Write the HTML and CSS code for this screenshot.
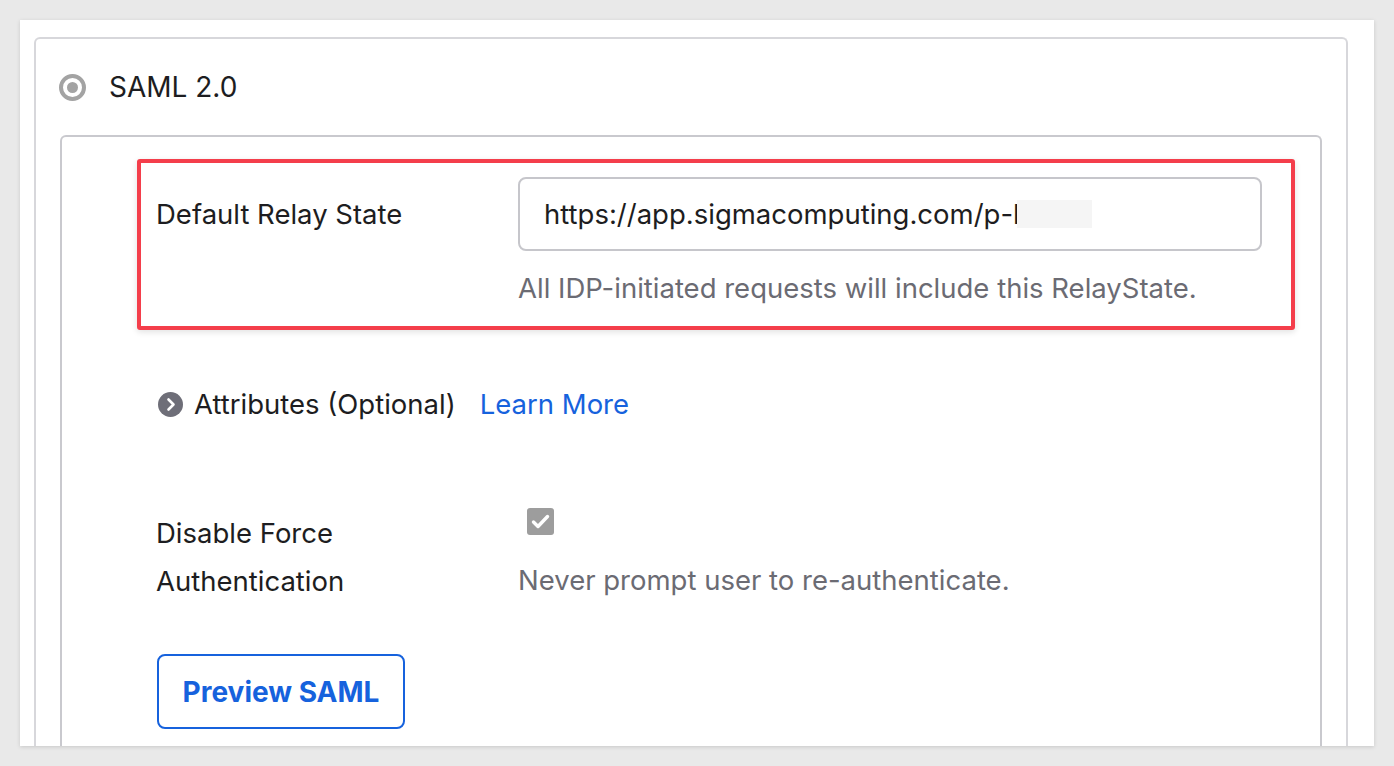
FILE: index.html
```html
<!DOCTYPE html>
<html lang="en">
<head>
<meta charset="utf-8">
<title>SAML 2.0 settings</title>
<link rel="stylesheet" href="styles.css">
</head>
<body>
<div class="panel">
  <div class="card">
    <div class="card-head">
      <span class="radio"><span class="radio-dot"></span></span>
      <span class="card-title">SAML 2.0</span>
    </div>
    <div class="inner">
      <div class="highlight">
        <div class="field">
          <div class="label label-first">Default Relay State</div>
          <div class="value">
            <div class="text-input"><span class="input-text">https://app.sigmacomputing.com/p-b</span><span class="redact"></span></div>
            <div class="helper helper-first">All IDP-initiated requests will include this RelayState.</div>
          </div>
        </div>
      </div>

      <div class="attributes">
        <svg class="chev" width="25" height="25" viewBox="0 0 25 25" aria-hidden="true">
          <circle cx="12.5" cy="12.5" r="12.5" fill="#6e6e78"/>
          <path d="M10.5 7.5 L15.5 12.5 L10.5 17.5" fill="none" stroke="#fff" stroke-width="2.6" stroke-linecap="round" stroke-linejoin="round"/>
        </svg>
        <span class="attr-text">Attributes (Optional)</span>
        <a class="learn" href="#">Learn More</a>
      </div>

      <div class="field field-force">
        <div class="label">Disable Force<br>Authentication</div>
        <div class="value">
          <div class="check-wrap">
            <span class="checkbox">
              <svg width="27" height="27" viewBox="0 0 27 27" aria-hidden="true">
                <path d="M6.5 14 L11 18.5 L20.5 8.5" fill="none" stroke="#fff" stroke-width="3.4" stroke-linecap="round" stroke-linejoin="round"/>
              </svg>
            </span>
          </div>
          <div class="helper">Never prompt user to re-authenticate.</div>
        </div>
      </div>

      <button class="btn" type="button">Preview SAML</button>
    </div>
  </div>
</div>
</body>
</html>
```

FILE: styles.css
```css
html, body {
  margin: 0;
  padding: 0;
}
body {
  background: #e9e9e9;
  height: 766px;
  overflow: hidden;
  font-family: Inter, "Noto Sans", "Liberation Sans", sans-serif;
  color: #1d1d21;
  font-size: 27.5px;
}
.panel {
  margin: 20px 20px 0 20px;
  height: 726px;
  background: #ffffff;
  box-shadow: 0 1px 4px rgba(0, 0, 0, 0.14);
  overflow: hidden;
}
.card {
  margin: 17px 26px 0 14px;
  border: 2px solid #d7d7db;
  border-bottom: none;
  border-radius: 6px 6px 0 0;
  padding: 0 24px;
  height: 900px;
}
.card-head {
  height: 96px;
  display: flex;
  align-items: center;
  gap: 23px;
}
.radio {
  width: 27px;
  height: 27px;
  box-sizing: border-box;
  border: 4px solid #a3a3a3;
  border-radius: 50%;
  display: flex;
  align-items: center;
  justify-content: center;
  margin-left: -1px;
}
.radio-dot {
  width: 11px;
  height: 11px;
  border-radius: 50%;
  background: #a3a3a3;
}
.card-title {
  font-size: 28px;
}
.inner {
  border: 2px solid #c9c9ce;
  border-bottom: none;
  border-radius: 6px 6px 0 0;
  padding: 22px 58px 0 94px;
  height: 800px;
}
.highlight {
  border: 4px solid #f43e4b;
  border-radius: 3px;
  margin: 0 -33px 0 -19px;
  padding: 14px 29px 14px 15px;
  box-shadow: 0 2px 6px rgba(0, 0, 0, 0.12);
}
.field {
  display: grid;
  grid-template-columns: 362px 1fr;
}
.label {
  line-height: 48px;
}
.label-first {
  padding-top: 13px;
}
.text-input {
  height: 74px;
  box-sizing: border-box;
  border: 2px solid #c6c6cb;
  border-radius: 8px;
  padding-left: 24px;
  display: flex;
  align-items: center;
  white-space: nowrap;
  overflow: hidden;
}
.redact {
  display: inline-block;
  width: 75px;
  height: 28px;
  background: #f5f5f5;
  margin-left: -13px;
}
.helper {
  line-height: 48px;
  color: #6b6b73;
}
.helper-first {
  margin-top: 13px;
}
.attributes {
  margin-top: 50px;
  height: 48px;
  display: flex;
  align-items: center;
}
.chev {
  margin-left: 2px;
  flex: none;
}
.attr-text {
  margin-left: 11px;
}
.learn {
  margin-left: 24px;
  color: #1662dd;
  text-decoration: none;
}
.field-force {
  margin-top: 81px;
}
.check-wrap {
  height: 48px;
}
.checkbox {
  display: block;
  width: 27px;
  height: 27px;
  margin: -1px 0 0 9px;
  background: #9d9d9d;
  border-radius: 3px;
}
.checkbox svg {
  display: block;
}
.btn {
  margin-top: 49px;
  width: 248px;
  height: 75px;
  border: 2px solid #1662dd;
  border-radius: 8px;
  background: #ffffff;
  color: #1662dd;
  font-family: Inter, "Noto Sans", "Liberation Sans", sans-serif;
  font-size: 28px;
  font-weight: 700;
  margin-left: 1px;
  padding: 0;
  cursor: pointer;
}
```
